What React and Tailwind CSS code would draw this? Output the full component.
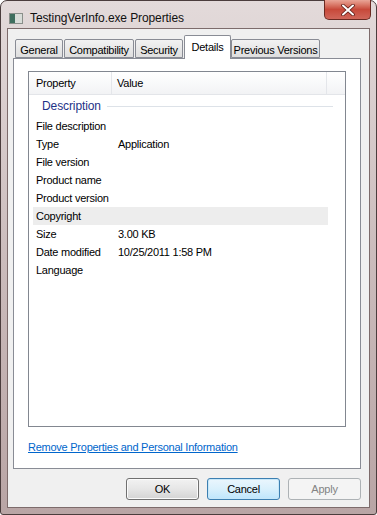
import React from "react";

const rows = [
  { label: "File description", value: "" },
  { label: "Type", value: "Application" },
  { label: "File version", value: "" },
  { label: "Product name", value: "" },
  { label: "Product version", value: "" },
  { label: "Copyright", value: "", selected: true },
  { label: "Size", value: "3.00 KB" },
  { label: "Date modified", value: "10/25/2011 1:58 PM" },
  { label: "Language", value: "" },
];

const tabs = [
  { name: "General", w: "w-[48px]" },
  { name: "Compatibility", w: "w-[70px]" },
  { name: "Security", w: "w-[48px]" },
  { name: "Details", w: "w-[47px]", active: true },
  { name: "Previous Versions", w: "w-[89px]" },
];

const font = { fontFamily: '"Liberation Sans", Arial, sans-serif' };

const App = () => {
  return (
    <div
      className="w-[377px] h-[515px] flex flex-col border border-[#4b3d3d] rounded-t-[7px] rounded-b-[3px] bg-gradient-to-b from-[#e3dada] via-[#cbbcbc] to-[#b9a5a5] px-[6px] pb-[6px] text-[11px] tracking-[-0.25px] text-black"
      style={font}
    >
      {/* ---- Title bar ---- */}
      <div className="h-[27px] flex items-start shrink-0">
        <div className="flex items-center gap-[7px] mt-[8px] ml-[2px]">
          <div className="w-[14px] h-[11px] bg-[#d8dcd8] border border-[#8a8f8a] flex">
            <div className="w-[5px] h-full bg-[#3f6e5e]"></div>
          </div>
          <span className="text-[12px] tracking-[-0.1px] text-[#111]">
            TestingVerInfo.exe Properties
          </span>
        </div>
        <div className="ml-auto -mt-px mr-[-1px] w-[47px] h-[20px] rounded-b-[5px] border border-t-0 border-[#6b2a22] bg-gradient-to-b from-[#e9a597] via-[#c7493a] to-[#d0665a] flex items-center justify-center">
          <svg width="14" height="12" viewBox="0 0 14 12">
            <path
              d="M2 1.5 L12 10.5 M12 1.5 L2 10.5"
              stroke="#5a1a14"
              strokeWidth="3.6"
              strokeLinecap="round"
            />
            <path
              d="M2 1.5 L12 10.5 M12 1.5 L2 10.5"
              stroke="#ffffff"
              strokeWidth="2"
              strokeLinecap="round"
            />
          </svg>
        </div>
      </div>

      {/* ---- Dialog body ---- */}
      <div className="flex-1 border border-[#7d6b6b] bg-[#f0f0f0] pl-[5px] pt-[6px]">
        {/* ---- Tabs ---- */}
        <div className="flex items-end h-[23px] pl-[2px] relative z-10">
          {tabs.map((tab) => (
            <div
              key={tab.name}
              className={`${tab.w} flex justify-center border border-[#898c95] rounded-t-[2px] ${
                tab.active
                  ? "h-[24px] -mb-px bg-white border-b-0 pt-[3px] mx-0"
                  : "h-[19px] bg-gradient-to-b from-[#f2f2f2] to-[#dedede] pt-[2px] mr-px"
              }`}
            >
              {tab.name}
            </div>
          ))}
        </div>

        {/* ---- Tab panel ---- */}
        <div className="w-[348px] h-[411px] bg-white border border-[#898c95] flex flex-col">
          <div className="ml-[14px] mt-[12px] w-[318px] h-[356px] border border-[#828790]">
            {/* header */}
            <div className="h-[23px] flex items-center border-b border-[#e3e5e9] bg-gradient-to-b from-white to-[#f2f3f5]">
              <div className="w-[83px] pl-[7px] border-r border-[#e4e6ea] h-full flex items-center">
                Property
              </div>
              <div className="w-[215px] pl-[5px] border-r border-[#e4e6ea] h-full flex items-center">
                Value
              </div>
            </div>
            {/* group */}
            <div className="h-[22px] flex items-center pl-[13px] pr-[12px] gap-[6px]">
              <span className="text-[12px] text-[#1e3287] tracking-[-0.1px]">
                Description
              </span>
              <div className="flex-1 h-px bg-[#dde2e8]"></div>
            </div>
            {rows.map((row) => (
              <div
                key={row.label}
                className={`h-[18px] flex items-center ml-[4px] mr-[17px] ${
                  row.selected ? "bg-[#ededed]" : ""
                }`}
              >
                <div className="w-[85px] pl-[3px]">{row.label}</div>
                <div>{row.value}</div>
              </div>
            ))}
          </div>

          <div className="ml-[14px] mt-[12px]">
            <span className="text-[#0066cc] underline underline-offset-[1px]">
              Remove Properties and Personal Information
            </span>
          </div>
        </div>

        {/* ---- Buttons ---- */}
        <div className="flex justify-end gap-[8px] w-[348px] mt-[9px]">
          <button className="w-[73px] h-[22px] rounded-[3px] border border-[#707070] bg-gradient-to-b from-[#f2f2f2] via-[#e6e6e6] to-[#d4d4d4] shadow-[inset_0_0_0_1px_#fbfbfb]">
            OK
          </button>
          <button className="w-[73px] h-[22px] rounded-[3px] border border-[#3c7fb1] bg-gradient-to-b from-[#eaf6fd] via-[#d9f0fc] to-[#bee6fd] shadow-[inset_0_0_0_1px_#c6e7f9]">
            Cancel
          </button>
          <button className="w-[73px] h-[22px] rounded-[3px] border border-[#adb2b5] bg-[#f4f4f4] text-[#838383]">
            Apply
          </button>
        </div>
      </div>
    </div>
  );
};

export default App;
